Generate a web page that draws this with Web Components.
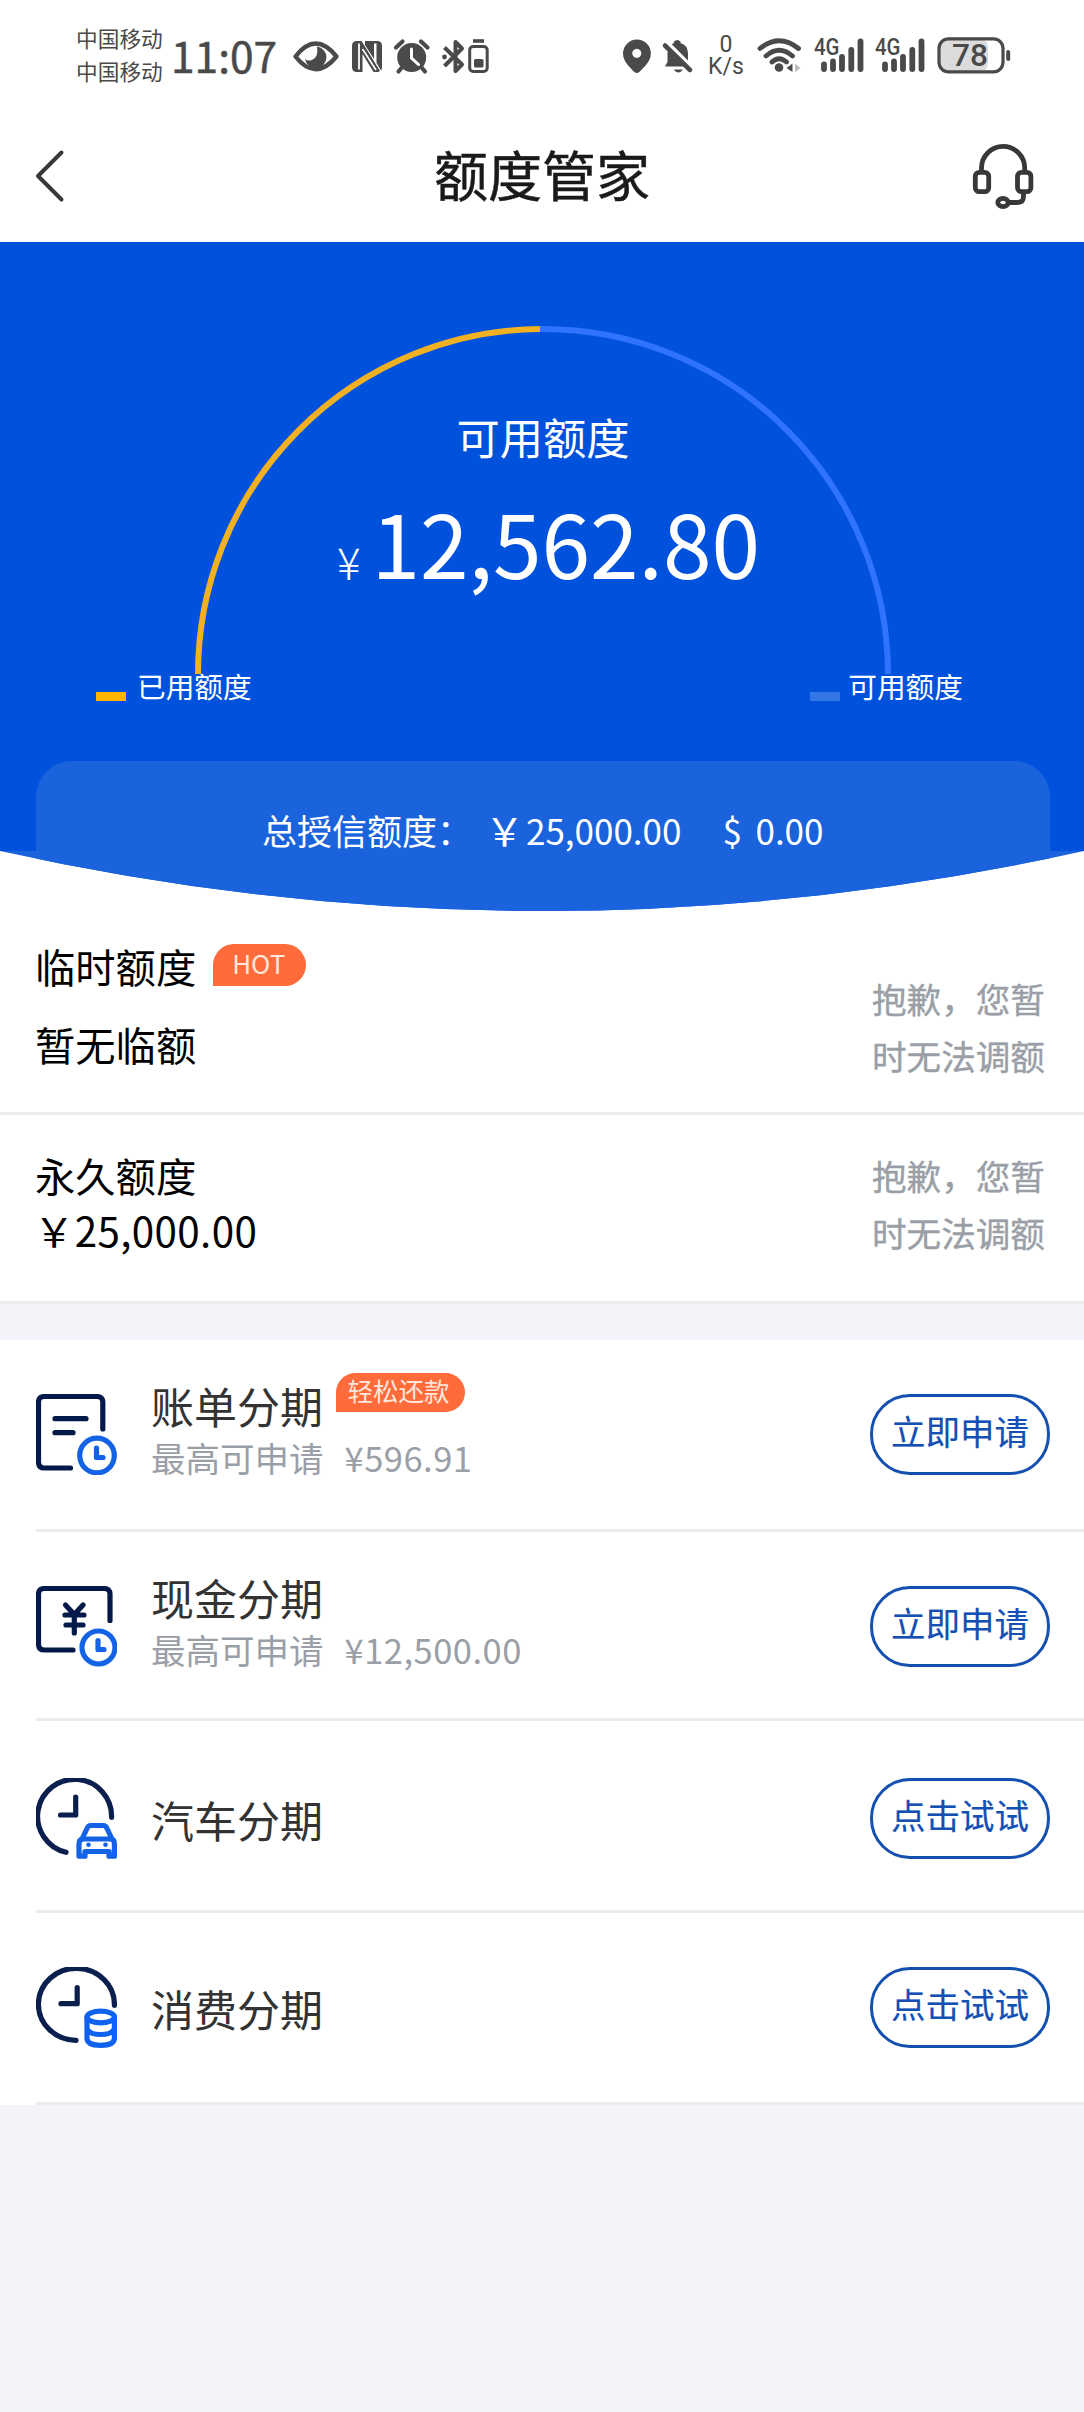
<!DOCTYPE html>
<html lang="zh-CN">
<head>
<meta charset="utf-8">
<title>额度管家</title>
<style>
html,body{margin:0;padding:0;background:#f3f4f9}
body{width:1084px;height:2412px;overflow:hidden;font-family:"Noto Sans CJK SC","Noto Sans",sans-serif}
</style>
</head>
<body>
<quota-app></quota-app>
<script>
const define = (name, html) => {
  const tpl = document.createElement('template');
  tpl.innerHTML = html;
  customElements.define(name, class extends HTMLElement {
    constructor() {
      super();
      this.attachShadow({ mode: 'open' }).appendChild(tpl.content.cloneNode(true));
    }
  });
};

/* ---------- system status bar ---------- */
define('signal-bars', `
<style>
:host{display:block;width:51px;height:46px}
svg{display:block}
text{font:500 24px Roboto,sans-serif;fill:#4a4a4a}
</style>
<svg width="51" height="46" viewBox="0 -10 51 46">
  <text x="0" y="16.500" textLength="25.500" lengthAdjust="spacingAndGlyphs">4G</text>
  <g stroke="#4a4a4a" stroke-width="5.800" stroke-linecap="round">
    <path d="M10 26.500V31M19 23.500V31M28 19V31M37.300 12V31M46.500 3.500V31"/>
  </g>
</svg>`);

define('status-bar', `
<style>
:host{display:flex;height:110px;background:#fff;color:#4a4a4a;justify-content:space-between;box-sizing:border-box;padding:0 71px 0 76px}
.side{display:flex;align-items:flex-start}
.carrier{display:flex;flex-direction:column;font-size:21.700px;line-height:33px;padding-top:21px;width:95px;white-space:nowrap}
.time{font-size:42.500px;line-height:60px;margin-top:25px;width:121px;font-weight:400;white-space:nowrap;-webkit-text-stroke:.5px #4a4a4a}
svg{display:block}
.rate{display:flex;flex-direction:column;align-items:center;width:36px;font:23px/22px Roboto,sans-serif;padding-top:34px}
.rate span{white-space:nowrap}
.bat{font:500 31px Roboto,sans-serif;fill:#4a4a4a}
</style>
<div class="side">
  <div class="carrier"><span>中国移动</span><span>中国移动</span></div>
  <div class="time">11:07</div>
  <svg style="margin-top:36px" width="200" height="40" viewBox="292 36 200 40">
    <path d="M295.500 56.500Q315.500 30.500 336.500 56.500Q315.500 82 295.500 56.500Z" fill="none" stroke="#4a4a4a" stroke-width="4.400" stroke-linejoin="round"/>
    <path d="M317 46.500a10.800 10.800 0 1 1 -12 12.500q3 2.500 7 1q7-3 5-13.500z" fill="#4a4a4a"/>
    <path d="M357 41H361.500L380 71Q379 72 377.500 72H373.500L362.500 54V72H357Q352 72 352 67V46Q352 41 357 41Z" fill="#4a4a4a"/>
    <path d="M365 41H377Q382 41 382 46V67Q382 69 381 70.500L376.500 63V43.500H374V59L365 45Z" fill="#4a4a4a"/>
    <path d="M359 43.500V69.500" stroke="#fff" stroke-width="1.800"/>
    <path d="M362.500 49L376 70" stroke="#fff" stroke-width="1.600"/>
    <circle cx="411.700" cy="57.500" r="14.500" fill="#4a4a4a"/>
    <path d="M396 47.500L402.500 41.500M427.500 47.500L421 41.500M401 68.500L398.500 71.500M422.500 68.500L425 71.500" stroke="#4a4a4a" stroke-width="4.200" stroke-linecap="round"/>
    <path d="M411.500 49V58L418.500 64.500" fill="none" stroke="#fff" stroke-width="3" stroke-linecap="round"/>
    <path d="M444.500 47.500L462 64.500L455.500 71V42L462 48.500L444.500 66" fill="none" stroke="#4a4a4a" stroke-width="4" stroke-linejoin="round"/>
    <circle cx="444.500" cy="57" r="2.400" fill="#4a4a4a"/>
    <path d="M473 41H484" stroke="#4a4a4a" stroke-width="3.600"/>
    <rect x="469.700" y="46.500" width="17.500" height="25" rx="3.500" fill="none" stroke="#4a4a4a" stroke-width="3"/>
    <rect x="474" y="59" width="9.500" height="8.500" rx="1.500" fill="#4a4a4a"/>
  </svg>
</div>
<div class="side">
  <svg style="margin-top:36px" width="86" height="40" viewBox="622 36 86 40">
    <path fill-rule="evenodd" d="M636.800 39.500a14 14 0 0 1 14 14c0 8-7 14-11.500 18.500q-2.500 2-5 0C630 67.500 623 61.500 623 53.500a14 14 0 0 1 13.800-14zm0 9.300a4.500 4.500 0 1 0 .01 0z" fill="#4a4a4a"/>
    <path d="M665 66.500L667.500 62V53Q668 45 674 43V41.500Q677.300 38.500 680.500 41.500V43Q687.500 45 688 53V62L690.500 66.500Z" fill="#4a4a4a"/>
    <path d="M673.500 69.500H683Q678.500 75.500 673.500 69.500Z" fill="#4a4a4a"/>
    <path d="M667.500 43L693 68.500" stroke="#fff" stroke-width="4"/>
    <path d="M665 45.500L690 70" stroke="#4a4a4a" stroke-width="4.600" stroke-linecap="round"/>
  </svg>
  <div class="rate"><span>0</span><span>K/s</span></div>
  <svg style="margin:36px 11px 0 13px" width="46" height="38" viewBox="756 36 46 38">
    <g fill="none" stroke="#4a4a4a" stroke-width="4.800" stroke-linecap="round">
      <path d="M759 48.500Q778 33 797.500 48.500M765 56Q778 44.500 791.500 56M771 62Q778 55.500 785.500 62"/>
    </g>
    <circle cx="778" cy="67.500" r="4.300" fill="#4a4a4a"/>
    <path d="M785.500 68L791.500 63.500V72Z" fill="#4a4a4a"/><path d="M799.500 68L794 63.500V72Z" fill="#bbb"/>
  </svg>
  <signal-bars style="margin:28px 10px 0 0"></signal-bars>
  <signal-bars style="margin:28px 11px 0 0"></signal-bars>
  <svg style="margin-top:32px;margin-right:0" width="76" height="48" viewBox="935 32 76 48">
    <rect x="937" y="39" width="49" height="32.500" rx="8" fill="#dcdcdc"/>
    <rect x="937" y="38.800" width="64" height="33" rx="9.500" fill="none" stroke="#4a4a4a" stroke-width="3.200"/>
    <path d="M1006.200 52V59" stroke="#4a4a4a" stroke-width="4" stroke-linecap="round"/>
    <text class="bat" x="950" y="66" textLength="36" lengthAdjust="spacingAndGlyphs">78</text>
  </svg>
</div>`);

/* ---------- navigation bar ---------- */
define('head-set', `
<style>:host{display:block;width:90px;height:90px}svg{display:block}</style>
<svg width="90" height="90" viewBox="0 0 90 90">
  <g fill="none" stroke="#38383b" stroke-width="4.800" stroke-linecap="round">
    <path d="M21.500 41V38a21.600 21.600 0 0 1 43.200 0V41"/>
    <rect x="15.300" y="42.300" width="13.400" height="19.400" rx="4"/>
    <rect x="57.500" y="42.300" width="13.400" height="19.400" rx="4"/>
    <path d="M63.500 63V66.500Q63.500 72.500 57.500 72.500H50"/>
    <ellipse cx="43" cy="72.500" rx="5.200" ry="4.200"/>
  </g>
</svg>`);

define('title-bar', `
<style>
:host{display:flex;align-items:flex-start;justify-content:space-between;height:132px;background:#fff;padding:0 34px 0 18px;box-sizing:border-box}
.back{display:block;margin-top:36px;width:106px}
h1{margin:24px 0 0;text-align:center;font-size:54px;font-weight:400;line-height:80px;color:#1a1a1a;-webkit-text-stroke:.5px #1a1a1a}
head-set{margin-top:20px}
</style>
<svg class="back" width="106" height="60" viewBox="0 0 106 60"><path d="M43.500 6.500L20 30L43.500 53.500" fill="none" stroke="#38383b" stroke-width="4" stroke-linecap="round" stroke-linejoin="round"/></svg>
<h1><slot></slot></h1>
<head-set></head-set>`);

/* ---------- blue summary ---------- */
define('legend-item', `
<style>
:host{display:flex;align-items:flex-end;height:30px;gap:var(--gap,12px);font-size:28.700px;line-height:30px;color:#fff;white-space:nowrap}
i{display:block;width:30px;height:9px;background:var(--swatch)}
</style>
<i></i><span><slot></slot></span>`);

define('quota-gauge', `
<style>
:host{display:grid;width:1084px;height:519px}
svg,.info{grid-area:1/1}
svg{display:block}
.info{display:flex;flex-direction:column;color:#fff}
.label{margin-top:164px;text-align:center;font-size:43.300px;line-height:60px;padding-left:2px}
.amount{display:flex;justify-content:center;align-items:baseline;margin-top:25px;height:100px;line-height:100px;padding-left:13px}
.amount small{font-size:44px;font-weight:300;margin-right:11px;transform:translateY(1px)}
.amount b{font-size:87.500px;font-weight:400}
.legend{display:flex;justify-content:space-between;margin-top:80px;padding:0 121px 0 96px}
</style>
<svg width="1084" height="519" viewBox="0 0 1084 519" fill="none" stroke-width="6">
  <path d="M198 432A345 345 0 0 1 540 87" stroke="#f2b122"/>
  <path d="M540 87H543A345 345 0 0 1 888 432" stroke="#2f73ff"/>
</svg>
<div class="info">
  <div class="label">可用额度</div>
  <div class="amount"><small>¥</small><b>12,562.80</b></div>
  <div class="legend">
    <legend-item style="--swatch:#ffb400;--gap:11px">已用额度</legend-item>
    <legend-item style="--swatch:#3377e6;--gap:8px">可用额度</legend-item>
  </div>
</div>`);

define('quota-summary', `
<style>
:host{display:block;height:669px;background:#fff}
.sheet{height:669px;background:linear-gradient(#0052dc 0 609px,#1a63dd 609px);clip-path:path('M0 0H1084V609Q542 729 0 609Z')}
.panel{height:150px;box-sizing:border-box;margin:0 34px 0 36px;background:#1a63dd;border-radius:36px 36px 0 0;color:#fff;font-size:35px;line-height:137px;display:flex;padding-left:226px;white-space:nowrap}
.cny{margin-left:13px;width:41px;font-size:39px}
.usd{margin-left:41px;width:33px}
</style>
<div class="sheet">
<quota-gauge></quota-gauge>
<div class="panel"><span>总授信额度：</span><span class="cny">￥</span><span>25,000.00</span><span class="usd">$</span><span>0.00</span></div>
</div>`);

/* ---------- limits ---------- */
define('tag-badge', `
<style>
:host{display:block;box-sizing:border-box;background:#ff6b3b;color:#ffe6dc;border-radius:21px 21px 21px 0;text-align:center;white-space:nowrap}
</style><slot></slot>`);

define('limit-row', `
<style>
:host{display:flex;justify-content:space-between;box-sizing:border-box;background:#fff;border-bottom:3px solid #ececee;padding:0 38px 0 35px;color:#000}
.left{display:flex;flex-direction:column;font-size:40.300px;line-height:50px;gap:var(--gap);padding-top:var(--top)}
.head{display:flex;height:50px;gap:17px}
.note{width:174px;margin-top:var(--note);font-size:34.600px;line-height:56.500px;color:#9a9fa7;-webkit-text-stroke:.4px #9a9fa7}
</style>
<div class="left"><div class="head"><slot name="name"></slot><slot name="badge"></slot></div><slot name="value"></slot></div>
<div class="note"><slot></slot></div>`);

/* ---------- instalment list ---------- */
const ICONS = {
  bill: `<g stroke="#03194a"><path d="M66.800 35V8.300Q66.800 2.500 60.800 2.500H8.300Q2.500 2.500 2.500 8.300V68Q2.500 74 8.300 74H34.500"/><path d="M19 24.700H50M19 38.700H37"/></g><g stroke="#1463e6"><circle cx="61" cy="61.500" r="17.300"/><path d="M60.500 54V63.500H67"/></g>`,
  cash: `<g stroke="#03194a"><path d="M74 34.500V8.300Q74 2.500 68 2.500H8.300Q2.500 2.500 2.500 8.300V58Q2.500 64 8.300 64H37"/><path d="M29.500 19L38.300 28.500L47 19M29 29H48M30 39H47M38.300 29V47"/></g><g stroke="#1463e6"><circle cx="62.500" cy="61.500" r="16.500"/><path d="M62 54.500V63.500H68"/></g>`,
  car: `<g stroke="#0a1f4d"><path d="M75.600 39.500A37 37 0 1 0 30 74.300"/><path d="M39.700 19V37H24.500"/></g><g stroke="#1463e6"><path d="M46 61L51 50.500Q52 47.500 55 47.500H67Q70 47.500 71 50.500L76 61"/><path d="M43 78.200V65.500Q43 61 47.500 61H74.500Q78.400 61 78.400 65.500V78.200H73V73.500H49V78.200Z"/></g><circle cx="52.500" cy="66.800" r="2.300" fill="#1463e6"/><circle cx="69.500" cy="66.800" r="2.300" fill="#1463e6"/>`,
  coins: `<g stroke="#0a1f4d"><path d="M78.400 38.500A38 36 0 1 0 40 73.300"/><path d="M41.200 20.500V36.700H25"/></g><g stroke="#0f62ee"><ellipse cx="64.700" cy="50" rx="13.700" ry="5.800"/><path d="M51 50V71.500Q51.500 78.300 64.700 78.300T78.400 71.500V50M51 61.500Q53 67.500 64.700 67.500T78.400 61.500"/></g>`
};
customElements.define('product-icon', class extends HTMLElement {
  constructor() {
    super();
    this.attachShadow({ mode: 'open' });
  }
  connectedCallback() {
    this.shadowRoot.innerHTML = `<style>:host{display:block;width:81px;height:81px}svg{display:block}</style>
<svg width="81" height="81" viewBox="0 0 81 81" fill="none" stroke-width="5.200" stroke-linecap="round" stroke-linejoin="round">${ICONS[this.getAttribute('name')]}</svg>`;
  }
});

define('pill-button', `
<style>
:host{display:block;box-sizing:border-box;width:180px;height:81px;border:3px solid #1450b0;border-radius:40px;text-align:center;font-size:34.500px;line-height:67px;color:#1450b4;white-space:nowrap;-webkit-text-stroke:.2px #1450b4}
</style><slot></slot>`);

define('product-row', `
<style>
:host{display:block;background:#fff;height:var(--h);box-sizing:border-box;padding-left:36px}
.row{display:flex;align-items:flex-start;box-sizing:border-box;height:100%;border-bottom:3px solid #ececee;padding:var(--top,54px) 34px 0 0}
.text{flex:1;display:flex;flex-direction:column;margin:var(--shift,-13.500px) 0 0 34px}
.head{display:flex;height:48px;gap:13px;font-size:43px;line-height:48px;color:#333;white-space:nowrap}
.sub{display:flex;gap:21px;margin-top:5px;font-size:34.500px;line-height:46px;color:#9a9fa7}
</style>
<div class="row">
  <slot name="icon"></slot>
  <div class="text"><div class="head"><slot name="name"></slot><slot name="badge"></slot></div><div class="sub"><slot name="sub"></slot></div></div>
  <slot name="action"></slot>
</div>`);

/* ---------- page ---------- */
define('quota-app', `
<style>
:host{display:flex;flex-direction:column;width:1084px;height:2412px;background:#f3f4f9}
.limits{display:flex;flex-direction:column;margin-bottom:36px}
.products{display:flex;flex-direction:column}
.hot{width:93px;height:42px;margin-top:3px;padding-right:2px;font-size:26px;line-height:38px}
.easy{width:129px;height:39px;margin-top:-8px;padding-right:4px;font-size:25.500px;line-height:34px}
.total{letter-spacing:.4px;text-indent:-1px}
.num{letter-spacing:.5px}
</style>
<status-bar></status-bar>
<title-bar>额度管家</title-bar>
<quota-summary></quota-summary>
<div class="limits">
  <limit-row style="height:204px;--top:30px;--gap:27.500px;--note:59px">
    <span slot="name">临时额度</span><tag-badge slot="badge" class="hot">HOT</tag-badge>
    <span slot="value">暂无临额</span>抱歉，您暂时无法调额
  </limit-row>
  <limit-row style="height:189px;--top:35px;--gap:4.500px;--note:32px">
    <span slot="name">永久额度</span>
    <span slot="value" class="total">￥25,000.00</span>抱歉，您暂时无法调额
  </limit-row>
</div>
<div class="products">
  <product-row style="--h:192px">
    <product-icon slot="icon" name="bill"></product-icon>
    <span slot="name">账单分期</span><tag-badge slot="badge" class="easy">轻松还款</tag-badge>
    <span slot="sub">最高可申请</span><span slot="sub" class="num">¥596.91</span>
    <pill-button slot="action">立即申请</pill-button>
  </product-row>
  <product-row style="--h:189px">
    <product-icon slot="icon" name="cash"></product-icon>
    <span slot="name">现金分期</span>
    <span slot="sub">最高可申请</span><span slot="sub" class="num">¥12,500.00</span>
    <pill-button slot="action">立即申请</pill-button>
  </product-row>
  <product-row style="--h:192px;--top:57px;--shift:16.500px">
    <product-icon slot="icon" name="car"></product-icon>
    <span slot="name">汽车分期</span>
    <pill-button slot="action">点击试试</pill-button>
  </product-row>
  <product-row style="--h:192px;--top:54px;--shift:16.500px">
    <product-icon slot="icon" name="coins"></product-icon>
    <span slot="name">消费分期</span>
    <pill-button slot="action">点击试试</pill-button>
  </product-row>
</div>`);
</script>
</body>
</html>
